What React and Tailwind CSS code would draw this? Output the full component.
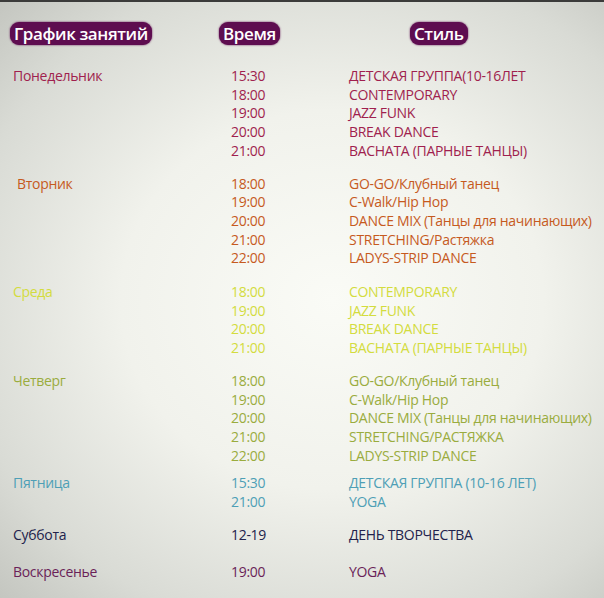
const schedule = [
  {
    day: "Понедельник",
    color: "text-[#a01f4e]",
    gap: "mt-[21px]",
    rows: [
      ["15:30", "ДЕТСКАЯ ГРУППА(10-16ЛЕТ"],
      ["18:00", "CONTEMPORARY"],
      ["19:00", "JAZZ FUNK"],
      ["20:00", "BREAK DANCE"],
      ["21:00", "BACHATA (ПАРНЫЕ ТАНЦЫ)"],
    ],
  },
  {
    day: "Вторник",
    color: "text-[#c65a1e]",
    gap: "mt-[14px]",
    indent: true,
    rows: [
      ["18:00", "GO-GO/Клубный танец"],
      ["19:00", "C-Walk/Hip Hop"],
      ["20:00", "DANCE MIX (Танцы для начинающих)"],
      ["21:00", "STRETCHING/Растяжка"],
      ["22:00", "LADYS-STRIP DANCE"],
    ],
  },
  {
    day: "Среда",
    color: "text-[#d3dc3e]",
    gap: "mt-[15px]",
    rows: [
      ["18:00", "CONTEMPORARY"],
      ["19:00", "JAZZ FUNK"],
      ["20:00", "BREAK DANCE"],
      ["21:00", "BACHATA (ПАРНЫЕ ТАНЦЫ)"],
    ],
  },
  {
    day: "Четверг",
    color: "text-[#9aac3e]",
    gap: "mt-[14px]",
    rows: [
      ["18:00", "GO-GO/Клубный танец"],
      ["19:00", "C-Walk/Hip Hop"],
      ["20:00", "DANCE MIX (Танцы для начинающих)"],
      ["21:00", "STRETCHING/РАСТЯЖКА"],
      ["22:00", "LADYS-STRIP DANCE"],
    ],
  },
  {
    day: "Пятница",
    color: "text-[#4e9fb6]",
    gap: "mt-[9px]",
    rows: [
      ["15:30", "ДЕТСКАЯ ГРУППА (10-16 ЛЕТ)"],
      ["21:00", "YOGA"],
    ],
  },
  {
    day: "Суббота",
    color: "text-[#22224c]",
    gap: "mt-[14px]",
    rows: [["12-19", "ДЕНЬ ТВОРЧЕСТВА"]],
  },
  {
    day: "Воскресенье",
    color: "text-[#6a1f58]",
    gap: "mt-[19px]",
    rows: [["19:00", "YOGA"]],
  },
];

function Pill({ children }) {
  return (
    <span className="inline-block rounded-[9px] bg-[#5e0d50] px-[4px] text-[17px] leading-[23px] font-semibold text-white shadow-[0_0_2px_#5e0d50]">
      {children}
    </span>
  );
}

export default function App() {
  return (
    <div
      className="w-[604px] h-[598px] overflow-hidden border-t-2 border-[#3b3b3a] bg-[radial-gradient(ellipse_at_55%_50%,#fafbf6_0%,#f1f2ec_45%,#d9dbd5_80%,#c4c6c0_100%)]"
      style={{ fontFamily: '"Open Sans", "Noto Sans", sans-serif' }}
    >
      <div className="flex pt-[20px] tracking-[-0.4px]">
        <div className="w-[219px] pl-[10px]">
          <Pill>График занятий</Pill>
        </div>
        <div className="w-[191px]">
          <Pill>Время</Pill>
        </div>
        <div>
          <Pill>Стиль</Pill>
        </div>
      </div>

      <div className="text-[14px] font-medium leading-[18.7px] tracking-[-0.3px]">
        {schedule.map((g) => (
          <div key={g.day} className={`flex ${g.gap} ${g.color}`}>
            <div className={`w-[231px] ${g.indent ? "pl-[17px]" : "pl-[13px]"}`}>
              {g.day}
            </div>
            <div className="w-[118px]">
              {g.rows.map((r, i) => (
                <div key={i}>{r[0]}</div>
              ))}
            </div>
            <div>
              {g.rows.map((r, i) => (
                <div key={i} className="whitespace-nowrap">
                  {r[1]}
                </div>
              ))}
            </div>
          </div>
        ))}
      </div>
    </div>
  );
}
